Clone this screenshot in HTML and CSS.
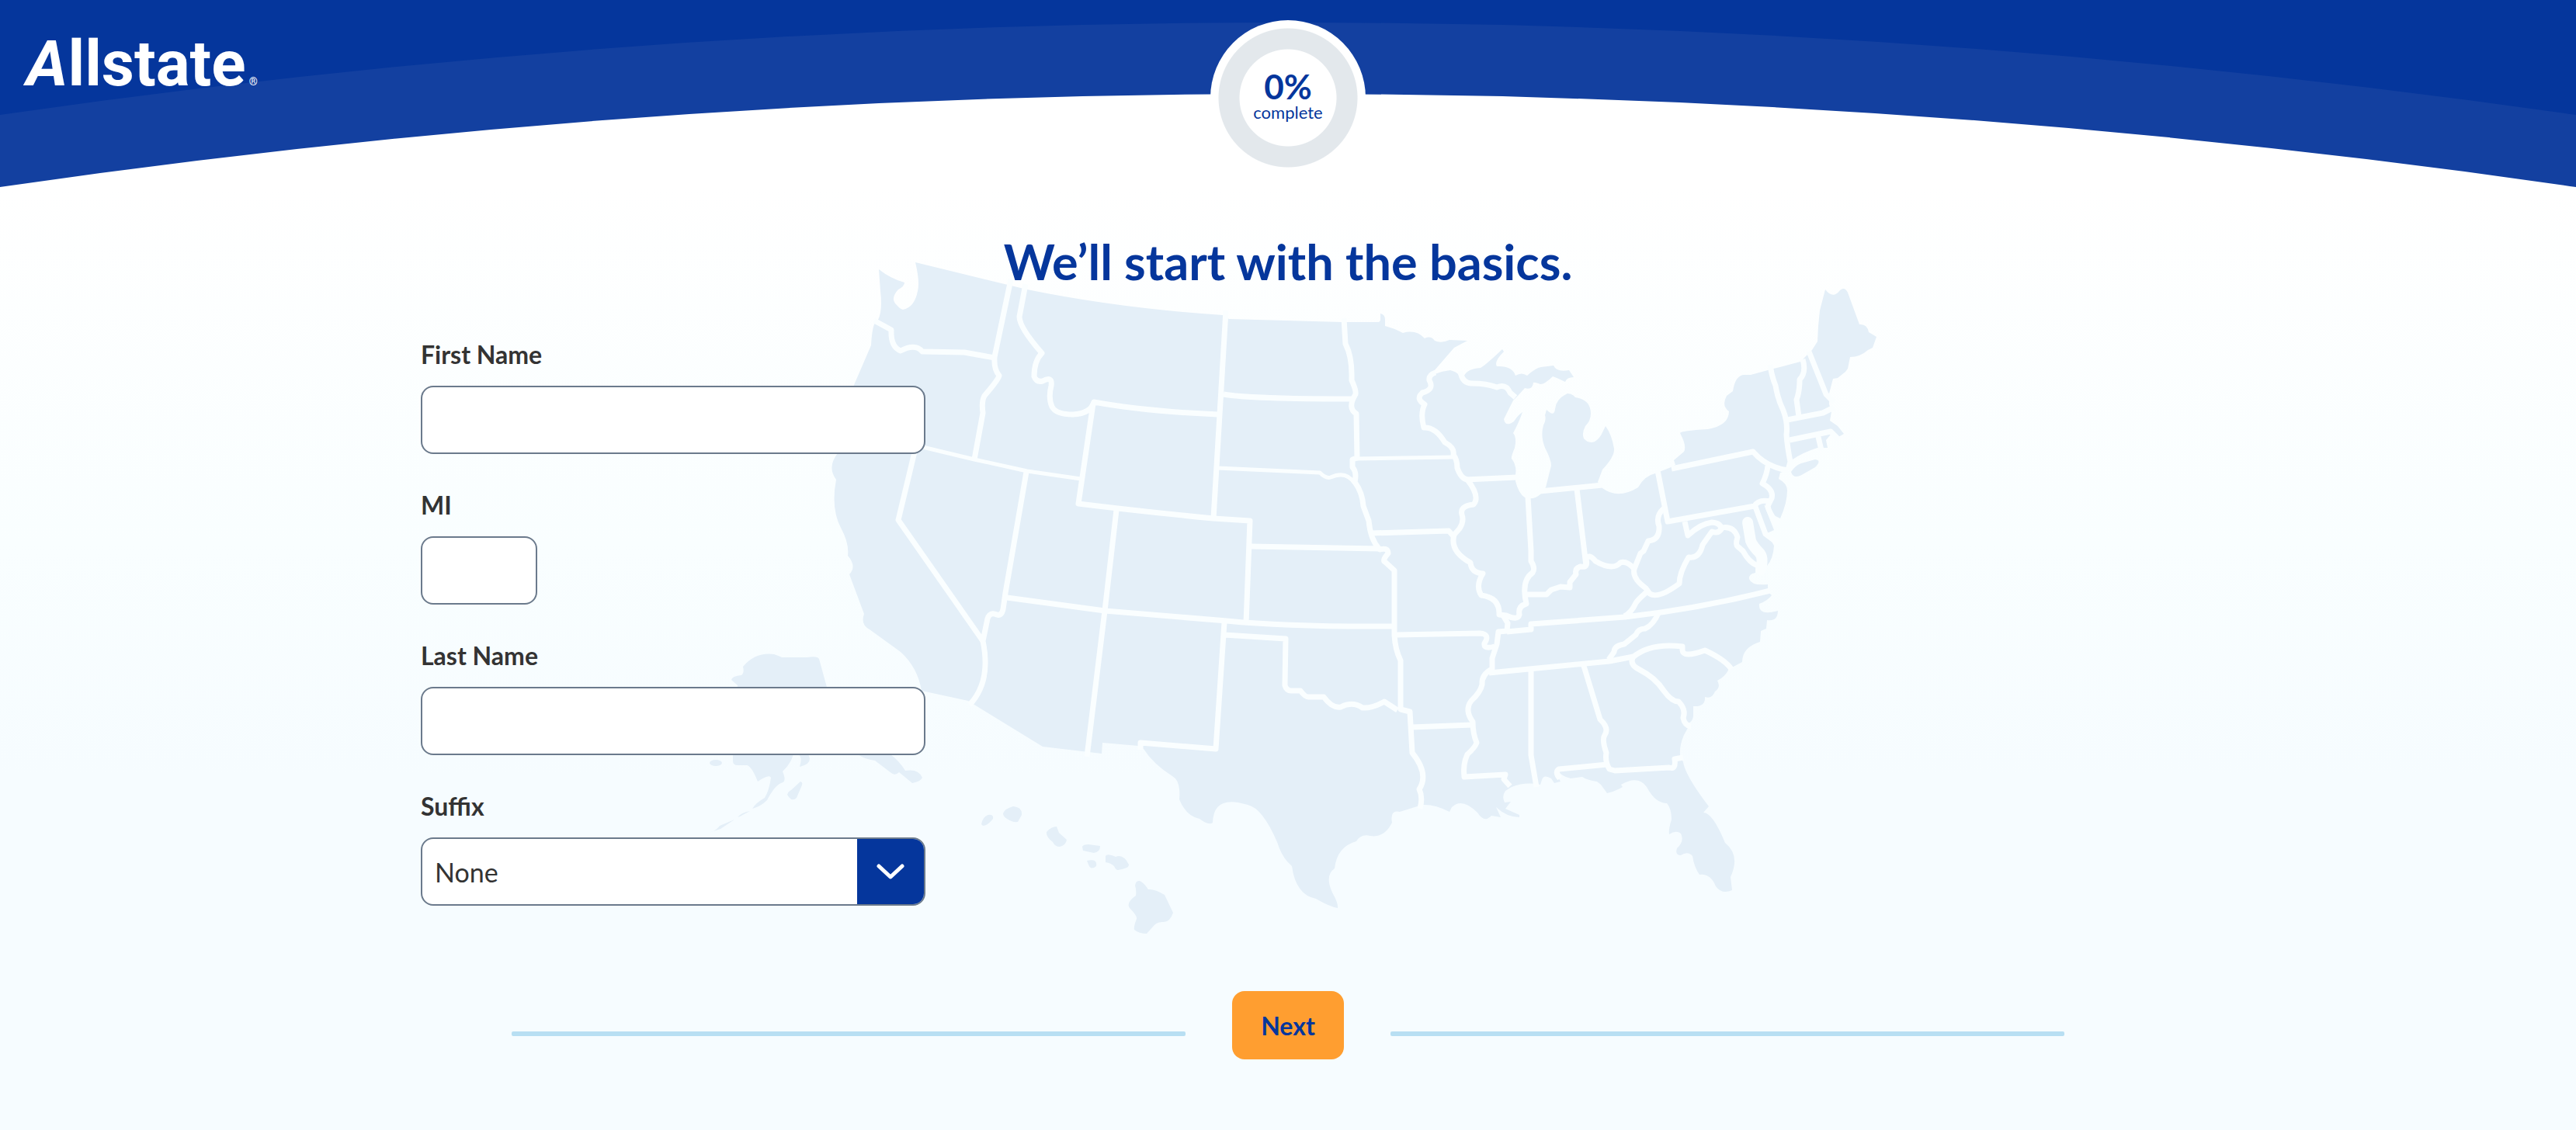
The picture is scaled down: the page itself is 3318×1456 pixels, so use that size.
FILE: index.html
```html
<!DOCTYPE html>
<html lang="en">
<head>
  <meta charset="utf-8">
  <title>Allstate</title>
  <link rel="stylesheet" href="styles.css">
</head>
<body>

<header class="header">
    <svg class="header-curve" viewBox="0 0 3318 241" preserveAspectRatio="none" aria-hidden="true">
        <path class="curve-light" d="M0 0H3318V241Q1659 1 0 241Z"/>
        <path class="curve-dark" d="M0 0H3318V148Q1659 -90 0 148Z"/>
    </svg>
    <a class="logo" href="#"><span class="logo-a">A</span>llstate<span class="logo-mark">®</span></a>
    <div class="progress">
        <strong class="progress-value">0%</strong>
        <span class="progress-text">complete</span>
    </div>
</header>

<main class="main">

    <svg class="map" viewBox="899 330 1520 880" aria-hidden="true">
        <!-- mainland -->
        <path class="land" d="M1132 347Q1147 359 1165 364Q1165 369 1157 373Q1146 385 1155 393Q1159 398 1163 399Q1178 396 1182 375Q1185 363 1179 338
            L1298 367L1323 373Q1440 397 1575 406L1583 411L1728 415H1775Q1778 415 1778 411V404Q1784 405 1784 412V420Q1796 423 1807 429Q1824 424 1835 436Q1843 432 1848 439
            Q1856 443 1867 438L1890 439L1873 448L1847 478L1848 482Q1858 478 1868 477Q1876 479 1879 483L1886 484Q1890 475 1907 474Q1914 470 1935 450L1937 453Q1924 466 1928 472
            Q1948 471 1952 484Q1960 479 1967 484Q1978 474 1985 473L2001 471Q2005 480 2021 477L2027 486Q2018 486 2016 492Q2006 487 2000 485Q1990 495 1984 495Q1976 492 1975 493
            Q1974 503 1964 500L1955 510L1949 516L1937 540Q1939 551 1950 543Q1955 535 1961 531Q1957 543 1949 558Q1954 564 1951 577Q1946 589 1947 591Q1954 600 1952 612V620
            Q1956 636 1964 641Q1975 645 1984 637L1991 628L1998 600Q1998 592 1990 577Q1984 562 1988 548Q1992 541 1990 535L1992 528Q2002 538 2003 527Q2004 514 2019 507Q2025 507 2029 512
            Q2049 515 2049 533Q2049 542 2042 549Q2037 558 2040 565Q2046 572 2054 569Q2061 565 2065 555L2068 549Q2076 560 2079 578Q2080 588 2064 605L2058 621L2064 629
            Q2084 644 2110 628Q2118 613 2132 610L2150 603L2158 599L2156 593L2169 582Q2173 575 2164 558Q2165 555 2200 553Q2227 548 2227 530Q2217 523 2224 510L2232 504
            Q2235 484 2246 483L2255 483L2277 477L2319 466L2334 451L2341 440L2342 420L2344 400L2351 373Q2361 386 2370 374Q2376 369 2380 377L2395 418Q2405 417 2407 428L2417 434
            L2412 448L2406 451Q2396 460 2383 460L2380 475L2377 479L2367 487L2361 488L2356 507V521L2359 530L2357 542L2367 549L2375 559L2368 563L2361 556L2357 561L2352 567L2354 577H2349L2341 577
            Q2322 583 2309 592L2303 606L2293 609L2291 617Q2302 623 2302 632Q2302 648 2293 668L2281 662L2272 650L2285 683L2276 687L2285 703Q2284 720 2276 729H2262L2261 738
            Q2252 740 2253 746Q2256 755 2277 753L2277 762L2282 767Q2277 774 2266 778Q2264 794 2290 787Q2290 801 2276 799L2275 810L2268 813L2267 827Q2244 834 2244 853
            L2227 862Q2222 872 2212 877Q2217 886 2209 891Q2205 901 2196 898Q2197 911 2181 910V923Q2180 930 2174 932V938L2169 947Q2163 961 2164 973L2168 982
            Q2171 1000 2201 1039L2194 1047Q2206 1047 2222 1086Q2242 1102 2229 1130L2231 1147Q2218 1153 2210 1142Q2203 1125 2189 1127Q2182 1117 2180 1103Q2174 1096 2165 1102
            Q2157 1102 2160 1093Q2170 1084 2165 1074Q2159 1069 2150 1075Q2149 1068 2153 1056Q2153 1042 2147 1035Q2132 1035 2121 1014Q2110 998 2088 1011L2090 1014
            Q2080 1020 2070 1022L2062 1011L2057 1007Q2044 1005 2038 1001L2023 1003Q2011 1000 2008 994L2003 995L2010 1007L2002 1009L1998 1003Q1988 997 1986 1005L1984 1011
            Q1965 1007 1947 1014L1939 1019Q1934 1026 1938 1034L1946 1033L1939 1042L1957 1050V1053Q1941 1053 1927 1040L1933 1053L1921 1051Q1912 1061 1903 1047Q1883 1027 1870 1040L1867 1046
            Q1848 1036 1832 1037L1803 1046Q1790 1043 1793 1060Q1783 1080 1765 1077Q1753 1074 1747 1084Q1722 1091 1719 1119Q1706 1128 1716 1150Q1724 1164 1723 1170Q1712 1168 1695 1158
            Q1669 1153 1664 1116L1658 1110Q1650 1101 1645 1085Q1626 1041 1607 1037Q1563 1023 1562 1060Q1557 1064 1545 1055Q1528 1052 1519 1030Q1521 1006 1510 1000Q1486 985 1473 965
            L1466 961L1420 957L1419 971L1343 962L1255 908L1247 903L1187 890Q1182 860 1160 840L1120 811Q1108 805 1113 791L1094 740Q1104 730 1092 716Q1094 700 1083 680
            Q1070 655 1077 618Q1065 602 1079 584L1088 540L1100 496L1122 445Q1123 425 1126 418L1131 412Q1137 400 1134 375Z"/>
        <path class="land" d="M2307 608Q2312 600 2320 597L2338 592Q2347 593 2338 602L2324 610Q2310 619 2307 608Z"/>

        <!-- Alaska -->
        <path class="land" d="M950 883L942 876Q943 871 955 870Q959 867 957 859Q973 840 997 843Q1003 845 1007 847H1040Q1053 845 1055 849L1080 940Q1130 950 1147 972
            Q1158 980 1166 993Q1183 990 1188 1002Q1186 1007 1175 1009L1158 995Q1153 1000 1148 996L1127 980Q1113 978 1105 972L1060 955L1041 972Q1048 984 1030 988Q1034 975 1028 972H1022
            Q1018 985 1008 994Q1014 1008 1006 1009Q998 1012 988 1031Q980 1039 969 1042Q974 1034 985 1028Q991 1018 993 1002Q991 997 976 1007Q968 987 962 986L950 986Q944 986 944 980L944 972V940Z"/>
        <ellipse class="land" cx="922" cy="983" rx="8" ry="4"/>
        <path class="land" d="M1031 1007Q1035 1008 1032 1014L1026 1028Q1020 1034 1014 1024Q1015 1020 1019 1018Z"/>
        <path class="land" d="M913 1073Q922 1071 927 1064L946 1056L928 1068ZM950 1053Q955 1047 966 1045L953 1052Z"/>

        <!-- Hawaii -->
        <path class="land" d="M1264 1062Q1266 1052 1273 1050Q1280 1049 1279 1055Q1272 1064 1266 1064ZM1292 1048Q1294 1042 1305 1039Q1317 1040 1316 1050L1311 1059Q1304 1060 1297 1055Q1292 1052 1292 1048Z
            M1348 1072Q1354 1065 1361 1065L1364 1073L1374 1082Q1373 1089 1365 1091Q1359 1091 1356 1085Q1347 1078 1348 1072ZM1394 1091Q1395 1088 1402 1088L1417 1090Q1417 1098 1409 1099L1395 1096ZM1400 1109Q1414 1106 1412 1116Q1405 1122 1402 1114Z
            M1424 1103Q1426 1099 1437 1104Q1447 1100 1454 1114Q1455 1119 1440 1121Q1437 1121 1435 1116Q1431 1112 1424 1111ZM1462 1141Q1463 1134 1468 1135Q1473 1137 1479 1146Q1487 1145 1500 1153L1511 1176
            Q1507 1188 1499 1188Q1490 1187 1485 1194L1477 1203Q1467 1203 1461 1198Q1460 1194 1464 1184Q1465 1180 1455 1170Q1450 1163 1463 1154Q1464 1147 1462 1141Z"/>

        <!-- state lines, west -->
        <path class="line" d="M1126 413L1148 425Q1147 447 1160 452Q1179 442 1188 453L1242 454L1281 461"/>
        <path class="line" d="M1302 360L1281 460Q1280 476 1287 484Q1286 489 1268 510Q1264 517 1266 532L1255 592"/>
        <path class="line" d="M1321 366L1313 408Q1313 422 1342 455Q1332 465 1332 485Q1335 493 1343 491Q1356 484 1354 497Q1350 513 1355 524Q1360 534 1382 534Q1405 533 1409 518Q1475 530 1569 534"/>
        <path class="line" d="M1579 400L1563 668"/>
        <path class="line" d="M1408 520L1389 649Q1470 659 1563 668L1610 671L1605 803"/>
        <path class="line thin" d="M1180 574L1255 592L1323 607L1392 617"/>
        <path class="line" d="M1180 574L1157 670L1266 826"/>
        <path class="line" d="M1322 608L1295 764L1292 785Q1290 794 1284 792Q1275 788 1272 797L1266 826Q1277 878 1249 908"/>
        <path class="line" d="M1297 770L1423 787L1580 800Q1660 808 1796 807"/>
        <path class="line" d="M1438 657L1423 787L1400 975"/>
        <path class="line" d="M1610 704L1777 707M1576 508Q1610 514 1743 514"/>
        <path class="line thin" d="M1568 603L1700 609Q1708 617 1714 615Q1734 606 1745 623"/>
        <path class="line" d="M1577 802L1566 965L1469 957V966M1577 818L1656 823L1655 883Q1657 890 1663 890H1675Q1681 898 1685 898H1705Q1716 913 1727 911Q1742 903 1755 912Q1767 913 1783 904L1800 915"/>

        <!-- centre -->
        <path class="line" d="M1731 410L1733 443Q1742 460 1741 490Q1747 503 1746 508Q1735 526 1747 533L1748 590L1742 592V602Q1748 608 1745 621Q1755 635 1756 652L1763 671Q1765 695 1777 708
            Q1788 705 1788 713Q1780 722 1784 724L1796 735V818Q1797 837 1804 851V914L1816 917L1819 970Q1841 997 1828 1017Q1833 1027 1829 1042"/>
        <path class="line thin" d="M1747 591L1872 589"/>
        <path class="line" d="M1767 687L1866 684L1873 692M1797 818L1906 816Q1920 817 1912 829Q1911 837 1925 833M1818 937L1896 934" />
        <path class="line" d="M1849 480Q1840 483 1841 490Q1848 502 1832 506Q1823 514 1835 521Q1829 533 1834 551Q1849 550 1861 570Q1874 577 1872 586Q1877 592 1877 603Q1882 617 1890 618
            Q1907 640 1898 650Q1880 652 1883 663Q1886 672 1880 681L1873 689Q1867 710 1894 725Q1895 738 1910 739Q1900 755 1908 767Q1932 770 1931 792L1940 793Q1955 800 1957 792Q1955 781 1966 778
            Q1959 748 1974 738Q1978 732 1972 723V710L1968 640"/>
        <path class="line" d="M1888 618L1954 615M1881 478Q1883 494 1896 494Q1915 494 1928 499Q1940 494 1945 506L1952 512"/>
        <path class="line" d="M1936 793L1942 803L1941 813L1930 814L1928 830L1922 848V862Q1908 869 1909 882Q1907 892 1895 903Q1886 915 1897 930Q1897 945 1902 957Q1900 963 1890 972Q1884 985 1886 1001L1939 998L1937 1004L1945 1013"/>

        <!-- east -->
        <path class="line" d="M1983 633L2064 625M2031 630L2043 729"/>
        <path class="line" d="M1967 766L1992 766L1998 760L2010 756L2022 757V750L2030 740Q2028 732 2036 730Q2046 732 2043 721Q2046 712 2055 723Q2077 736 2087 725Q2095 722 2105 733L2113 713L2117 710L2123 697Q2138 696 2137 678Q2132 665 2143 655"/>
        <path class="line" d="M2135 606L2148 672L2260 652Q2265 643 2280 646M2153 604L2258 582Q2275 602 2303 606"/>
        <path class="line" d="M2277 600Q2276 611 2270 623Q2285 631 2282 642L2277 652Q2278 660 2290 676"/>
        <path class="line" d="M2261 653L2274 688L2290 700"/>
        <path class="line" d="M2280 470Q2282 485 2287 497Q2290 515 2297 529Q2303 545 2301 560Q2302 575 2306 595L2303 606"/>
        <path class="line" d="M2322 463Q2327 480 2318 489Q2318 505 2314 515L2317 537M2330 453L2352 508L2362 518M2302 541L2348 532L2362 525M2305 567L2358 556L2368 566M2342 563L2346 580"/>
        <path class="line" d="M2170 672L2174 690Q2190 675 2205 673Q2217 674 2217 682Q2213 688 2205 685L2193 702Q2189 720 2175 718Q2163 738 2163 752Q2136 772 2125 765L2120 758Q2102 745 2105 733"/>
        <path class="line" d="M2217 680Q2233 677 2238 692Q2235 702 2238 704L2245 710Q2253 725 2264 729"/>
        <path class="bay" d="M2251 673L2255 697Q2258 704 2266 712Q2272 718 2268 734"/>
        <path class="line" d="M2122 762Q2110 772 2107 777Q2101 790 2092 794M1941 814L1972 811V804L2093 795Q2190 784 2280 761"/>
        <path class="line" d="M1918 867L2073 852L2104 846M1972 863V973L1979 1014M2040 858L2061 927Q2073 938 2067 947Q2063 953 2069 970Q2067 981 2073 991L2080 993L2150 989Q2159 992 2157 978L2168 976M2070 985L2008 991Q2002 995 2009 1003"/>
        <path class="line" d="M2230 862Q2222 850 2196 838Q2168 848 2167 838V833Q2125 828 2103 847Q2099 857 2112 863Q2132 873 2143 890Q2153 904 2162 904Q2172 914 2168 925Q2170 935 2178 936"/>
        <path class="line" d="M2137 788Q2130 805 2119 810Q2110 810 2107 818L2092 830Q2079 832 2079 840L2072 850"/>
    </svg>

    <div class="content">
        <h1 class="title">We’ll start with the basics.</h1>

        <form class="form">
            <div class="field">
                <label for="first-name">First Name</label>
                <input class="box" type="text" id="first-name">
            </div>
            <div class="field">
                <label for="mi">MI</label>
                <input class="box box-small" type="text" id="mi" maxlength="1">
            </div>
            <div class="field">
                <label for="last-name">Last Name</label>
                <input class="box" type="text" id="last-name">
            </div>
            <div class="field">
                <label for="suffix">Suffix</label>
                <div class="select">
                    <select class="box" id="suffix">
                        <option>None</option>
                        <option>Jr</option>
                        <option>Sr</option>
                        <option>II</option>
                        <option>III</option>
                    </select>
                    <span class="select-arrow">
                        <svg width="36" height="22" viewBox="0 0 36 22"><path d="M3 4L18 18L33 4"/></svg>
                    </span>
                </div>
            </div>

            <div class="actions">
                <button class="button" type="submit">Next</button>
            </div>
        </form>
    </div>

</main>

</body>
</html>
```

FILE: styles.css
```css
* {
    box-sizing: border-box;
}

body {
    margin: 0;
    min-height: 100vh;
    font-family: Lato, "Open Sans", sans-serif;
    color: #333;
    background: linear-gradient(#fff 240px, #f9feff 700px, #f6fcff 1000px);
}

/* header */
.header {
    display: grid;
    grid-template-columns: 1fr auto 1fr;
    grid-template-rows: 241px;
}

.header-curve {
    grid-area: 1 / 1 / 2 / 4;
    width: 100%;
    height: 100%;
}

.curve-light {
    fill: #1340a0;
}

.curve-dark {
    fill: #05369c;
}

.logo {
    grid-area: 1 / 1;
    align-self: start;
    padding: 34px;
    font-family: Roboto, sans-serif;
    font-size: 82px;
    line-height: 96px;
    font-weight: bold;
    color: #fff;
    text-decoration: none;
}

.logo-a {
    font-style: italic;
}

.logo-mark {
    margin-left: 4px;
    font-size: 14px;
    font-weight: normal;
}

.progress {
    grid-area: 1 / 2;
    display: flex;
    flex-direction: column;
    align-items: center;
    width: 200px;
    height: 200px;
    margin-top: 26px;
    padding-top: 62px;
    border-radius: 50%;
    background: radial-gradient(circle, #fff 62px, #e3e8ec 63px, #e3e8ec 89px, #fff 90px);
    color: #05369c;
}

.progress-value {
    font-size: 44px;
    line-height: 46px;
}

.progress-text {
    font-size: 22px;
    line-height: 22px;
}

/* page */
.main {
    display: grid;
}

.map {
    grid-area: 1 / 1;
    justify-self: center;
    width: 1520px;
    max-width: 100%;
    margin-top: 89px;
}

.land {
    fill: #e4eff8;
}

.line, .bay {
    fill: none;
    stroke: #fafeff;
    stroke-width: 7;
    stroke-linejoin: round;
}

.thin {
    stroke-width: 5;
}

.bay {
    stroke-width: 14;
    stroke-linecap: round;
}

.content {
    grid-area: 1 / 1;
    width: 100%;
    max-width: 2234px;
    margin: 0 auto;
    padding-top: 60px;
}

.title {
    margin: 0;
    font-size: 63px;
    line-height: 72px;
    text-align: center;
    color: #05369c;
}

.form {
    margin-top: 64px;
}

.field {
    width: 650px;
    max-width: 100%;
    margin-bottom: 46px;
}

label {
    display: block;
    padding-bottom: 20px;
    font-size: 32px;
    line-height: 40px;
    font-weight: bold;
}

.box {
    display: block;
    width: 100%;
    height: 88px;
    padding: 0 16px;
    border: 2px solid #6b7a8c;
    border-radius: 16px;
    background: #fff;
    font-family: inherit;
    font-size: 34px;
    color: #333;
}

.box-small {
    width: 150px;
}

.select {
    display: grid;
}

.select .box {
    grid-area: 1 / 1;
    appearance: none;
}

.select-arrow {
    grid-area: 1 / 1;
    justify-self: end;
    display: flex;
    align-items: center;
    justify-content: center;
    width: 86px;
    margin: 2px;
    border-radius: 0 14px 14px 0;
    background: #05369c;
    pointer-events: none;
}

.select-arrow path {
    fill: none;
    stroke: #fff;
    stroke-width: 5;
    stroke-linecap: round;
    stroke-linejoin: round;
}

/* next button between two lines */
.actions {
    display: flex;
    align-items: center;
    gap: 60px;
    max-width: 2000px;
    margin: 110px auto 92px;
}

.actions::before,
.actions::after {
    content: "";
    flex: 1;
    height: 6px;
    margin-top: 22px;
    border-radius: 2px;
    background: #b8dff3;
}

.button {
    width: 144px;
    height: 88px;
    border: 0;
    border-radius: 16px;
    background: #ff9e30;
    font-family: inherit;
    font-size: 32px;
    font-weight: bold;
    color: #05369c;
    cursor: pointer;
}
```
